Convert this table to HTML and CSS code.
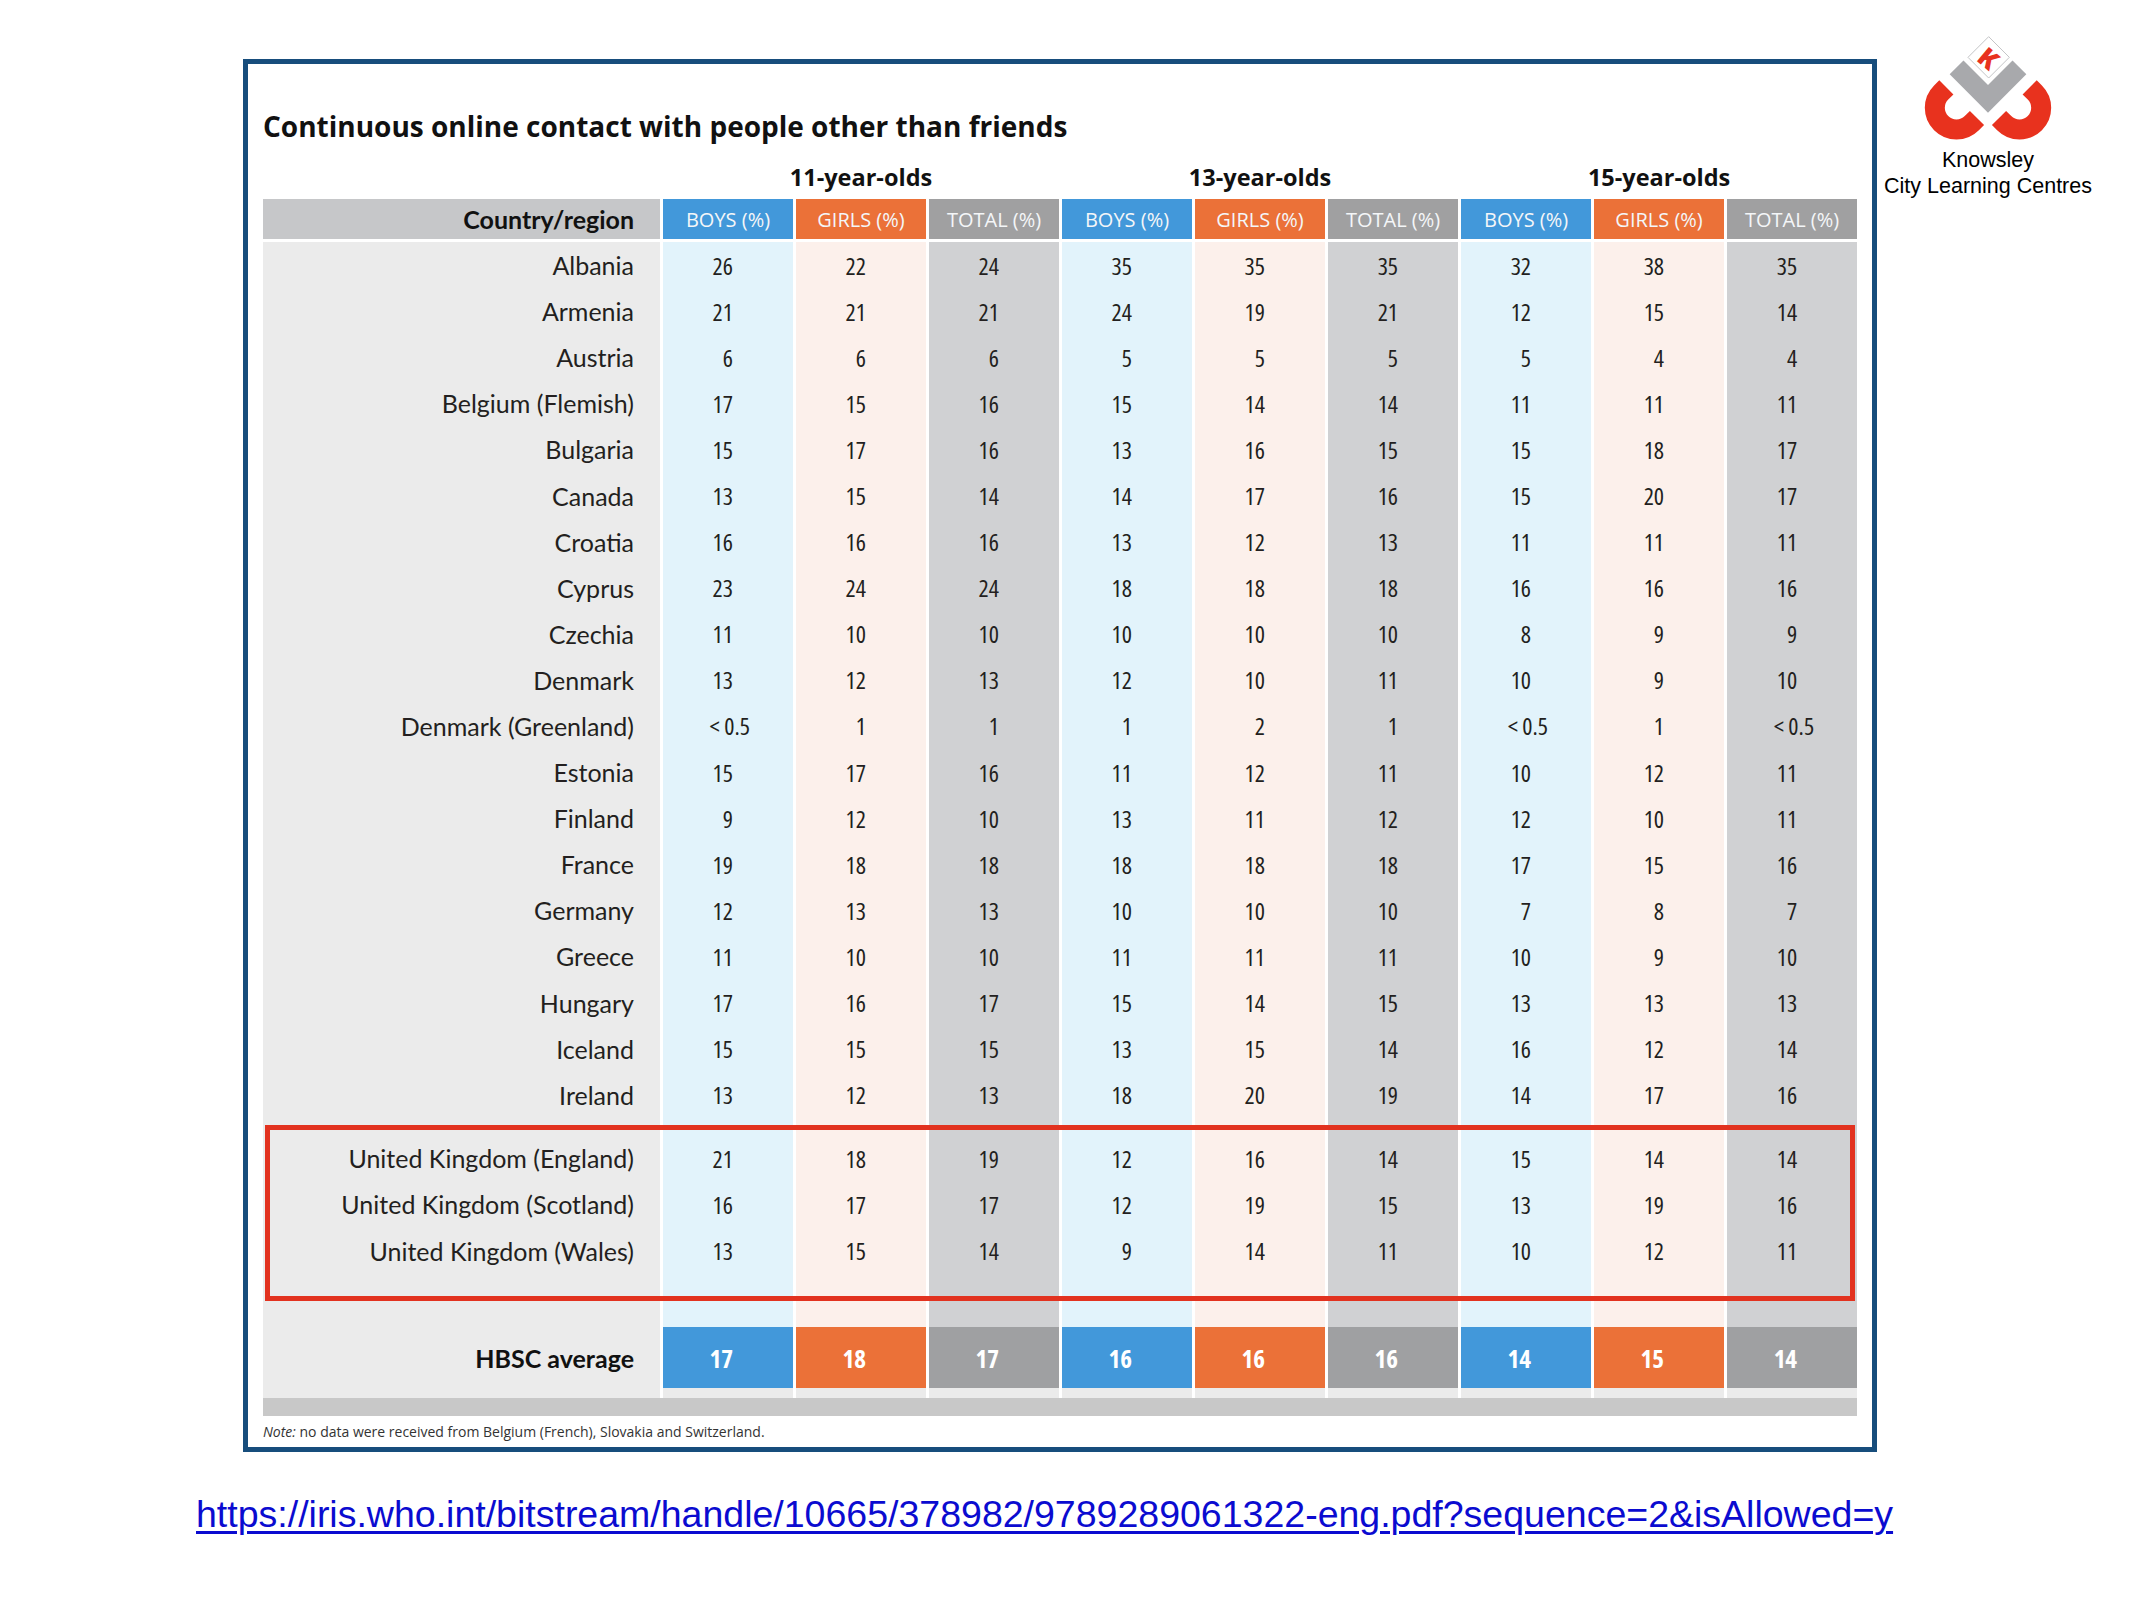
FILE: index.html
```html
<!DOCTYPE html>
<html lang="en">
<head>
<meta charset="utf-8">
<title>Continuous online contact with people other than friends</title>
<link rel="stylesheet" href="styles.css">
</head>
<body>
<div class="slide">
  <div class="top">
    <div class="frame">
      <h1 class="title">Continuous online contact with people other than friends</h1>
      <div class="table-wrap">
        <table class="data">
          <colgroup>
            <col class="c-name"><col class="c-val"><col class="c-val"><col class="c-val"><col class="c-val"><col class="c-val"><col class="c-val"><col class="c-val"><col class="c-val"><col class="c-val">
          </colgroup>
          <thead>
            <tr class="groups">
              <th></th>
              <th colspan="3">11-year-olds</th>
              <th colspan="3">13-year-olds</th>
              <th colspan="3">15-year-olds</th>
            </tr>
            <tr class="heads">
              <th class="hc">Country/region</th>
              <th class="hb">BOYS (%)</th><th class="hg">GIRLS (%)</th><th class="ht">TOTAL (%)</th>
              <th class="hb">BOYS (%)</th><th class="hg">GIRLS (%)</th><th class="ht">TOTAL (%)</th>
              <th class="hb">BOYS (%)</th><th class="hg">GIRLS (%)</th><th class="ht">TOTAL (%)</th>
            </tr>
          </thead>
          <tbody>
            <tr class="r"><td class="c">Albania</td><td class="b">26</td><td class="g">22</td><td class="t">24</td><td class="b">35</td><td class="g">35</td><td class="t">35</td><td class="b">32</td><td class="g">38</td><td class="t">35</td></tr>
            <tr class="r"><td class="c">Armenia</td><td class="b">21</td><td class="g">21</td><td class="t">21</td><td class="b">24</td><td class="g">19</td><td class="t">21</td><td class="b">12</td><td class="g">15</td><td class="t">14</td></tr>
            <tr class="r"><td class="c">Austria</td><td class="b">6</td><td class="g">6</td><td class="t">6</td><td class="b">5</td><td class="g">5</td><td class="t">5</td><td class="b">5</td><td class="g">4</td><td class="t">4</td></tr>
            <tr class="r"><td class="c">Belgium (Flemish)</td><td class="b">17</td><td class="g">15</td><td class="t">16</td><td class="b">15</td><td class="g">14</td><td class="t">14</td><td class="b">11</td><td class="g">11</td><td class="t">11</td></tr>
            <tr class="r"><td class="c">Bulgaria</td><td class="b">15</td><td class="g">17</td><td class="t">16</td><td class="b">13</td><td class="g">16</td><td class="t">15</td><td class="b">15</td><td class="g">18</td><td class="t">17</td></tr>
            <tr class="r"><td class="c">Canada</td><td class="b">13</td><td class="g">15</td><td class="t">14</td><td class="b">14</td><td class="g">17</td><td class="t">16</td><td class="b">15</td><td class="g">20</td><td class="t">17</td></tr>
            <tr class="r"><td class="c">Croatia</td><td class="b">16</td><td class="g">16</td><td class="t">16</td><td class="b">13</td><td class="g">12</td><td class="t">13</td><td class="b">11</td><td class="g">11</td><td class="t">11</td></tr>
            <tr class="r"><td class="c">Cyprus</td><td class="b">23</td><td class="g">24</td><td class="t">24</td><td class="b">18</td><td class="g">18</td><td class="t">18</td><td class="b">16</td><td class="g">16</td><td class="t">16</td></tr>
            <tr class="r"><td class="c">Czechia</td><td class="b">11</td><td class="g">10</td><td class="t">10</td><td class="b">10</td><td class="g">10</td><td class="t">10</td><td class="b">8</td><td class="g">9</td><td class="t">9</td></tr>
            <tr class="r"><td class="c">Denmark</td><td class="b">13</td><td class="g">12</td><td class="t">13</td><td class="b">12</td><td class="g">10</td><td class="t">11</td><td class="b">10</td><td class="g">9</td><td class="t">10</td></tr>
            <tr class="r"><td class="c">Denmark (Greenland)</td><td class="b">&lt; 0<span class="frac">.5</span></td><td class="g">1</td><td class="t">1</td><td class="b">1</td><td class="g">2</td><td class="t">1</td><td class="b">&lt; 0<span class="frac">.5</span></td><td class="g">1</td><td class="t">&lt; 0<span class="frac">.5</span></td></tr>
            <tr class="r"><td class="c">Estonia</td><td class="b">15</td><td class="g">17</td><td class="t">16</td><td class="b">11</td><td class="g">12</td><td class="t">11</td><td class="b">10</td><td class="g">12</td><td class="t">11</td></tr>
            <tr class="r"><td class="c">Finland</td><td class="b">9</td><td class="g">12</td><td class="t">10</td><td class="b">13</td><td class="g">11</td><td class="t">12</td><td class="b">12</td><td class="g">10</td><td class="t">11</td></tr>
            <tr class="r"><td class="c">France</td><td class="b">19</td><td class="g">18</td><td class="t">18</td><td class="b">18</td><td class="g">18</td><td class="t">18</td><td class="b">17</td><td class="g">15</td><td class="t">16</td></tr>
            <tr class="r"><td class="c">Germany</td><td class="b">12</td><td class="g">13</td><td class="t">13</td><td class="b">10</td><td class="g">10</td><td class="t">10</td><td class="b">7</td><td class="g">8</td><td class="t">7</td></tr>
            <tr class="r"><td class="c">Greece</td><td class="b">11</td><td class="g">10</td><td class="t">10</td><td class="b">11</td><td class="g">11</td><td class="t">11</td><td class="b">10</td><td class="g">9</td><td class="t">10</td></tr>
            <tr class="r"><td class="c">Hungary</td><td class="b">17</td><td class="g">16</td><td class="t">17</td><td class="b">15</td><td class="g">14</td><td class="t">15</td><td class="b">13</td><td class="g">13</td><td class="t">13</td></tr>
            <tr class="r"><td class="c">Iceland</td><td class="b">15</td><td class="g">15</td><td class="t">15</td><td class="b">13</td><td class="g">15</td><td class="t">14</td><td class="b">16</td><td class="g">12</td><td class="t">14</td></tr>
            <tr class="r"><td class="c">Ireland</td><td class="b">13</td><td class="g">12</td><td class="t">13</td><td class="b">18</td><td class="g">20</td><td class="t">19</td><td class="b">14</td><td class="g">17</td><td class="t">16</td></tr>
            <tr class="sp1"><td class="c"></td><td class="b"></td><td class="g"></td><td class="t"></td><td class="b"></td><td class="g"></td><td class="t"></td><td class="b"></td><td class="g"></td><td class="t"></td></tr>
            <tr class="r"><td class="c">United Kingdom (England)</td><td class="b">21</td><td class="g">18</td><td class="t">19</td><td class="b">12</td><td class="g">16</td><td class="t">14</td><td class="b">15</td><td class="g">14</td><td class="t">14</td></tr>
            <tr class="r"><td class="c">United Kingdom (Scotland)</td><td class="b">16</td><td class="g">17</td><td class="t">17</td><td class="b">12</td><td class="g">19</td><td class="t">15</td><td class="b">13</td><td class="g">19</td><td class="t">16</td></tr>
            <tr class="r"><td class="c">United Kingdom (Wales)</td><td class="b">13</td><td class="g">15</td><td class="t">14</td><td class="b">9</td><td class="g">14</td><td class="t">11</td><td class="b">10</td><td class="g">12</td><td class="t">11</td></tr>
            <tr class="sp2"><td class="c"></td><td class="b"></td><td class="g"></td><td class="t"></td><td class="b"></td><td class="g"></td><td class="t"></td><td class="b"></td><td class="g"></td><td class="t"></td></tr>
            <tr class="avg"><td class="c">HBSC average</td><td class="ab">17</td><td class="ag">18</td><td class="at">17</td><td class="ab">16</td><td class="ag">16</td><td class="at">16</td><td class="ab">14</td><td class="ag">15</td><td class="at">14</td></tr>
            <tr class="strip"><td></td><td></td><td></td><td></td><td></td><td></td><td></td><td></td><td></td><td></td></tr>
          </tbody>
        </table>
        <div class="highlight"></div>
      </div>
      <div class="bar"></div>
      <p class="note"><em>Note:</em> no data were received from Belgium (French), Slovakia and Switzerland.</p>
    </div>
    <div class="brand">
      <svg class="logo" width="140" height="110" viewBox="55 9 420 330" aria-hidden="true">
        <polygon points="150,133 191.5,91.5 265,165 338.5,91.5 380,133 265,248" fill="#a8a9ac"/>
        <polygon points="267,20 329,82 267,144 205,82" fill="#fff" stroke="#c4c5c7" stroke-width="3"/>
        <text x="0" y="0" transform="translate(267,84) rotate(40)" text-anchor="middle" dominant-baseline="central" class="k">K</text>
        <path d="M -65 0 L -65 22 A 65 65 0 0 0 65 22 L 65 0" transform="translate(186,218) rotate(45)" stroke="#e8321e" stroke-width="60" fill="none"/>
        <path d="M -65 0 L -65 22 A 65 65 0 0 0 65 22 L 65 0" transform="translate(344,218) rotate(-45)" stroke="#e8321e" stroke-width="60" fill="none"/>
      </svg>
      <div class="brand-name">Knowsley<br>City Learning Centres</div>
    </div>
  </div>
  <a class="source" href="https://iris.who.int/bitstream/handle/10665/378982/9789289061322-eng.pdf?sequence=2&amp;isAllowed=y">https://iris.who.int/bitstream/handle/10665/378982/9789289061322-eng.pdf?sequence=2&amp;isAllowed=y</a>
</div>
</body>
</html>
```
FILE: styles.css
```css
html, body {
  margin: 0;
  padding: 0;
  background: #fff;
}
body {
  width: 2133px;
  height: 1600px;
  overflow: hidden;
  font-family: "Lato", "Liberation Sans", sans-serif;
  color: #231f20;
}
.slide {
  display: flex;
  flex-direction: column;
}
.top {
  display: flex;
  align-items: flex-start;
  padding-left: 243px;
}
.frame {
  width: 1634px;
  box-sizing: border-box;
  margin-top: 59px;
  border: 5px solid #174d7c;
  padding: 44px 15px 5px 15px;
  height: 1393px;
}
.title {
  margin: 0;
  font-family: "Open Sans", sans-serif;
  font-weight: 700;
  font-stretch: 100%;
  font-size: 28px;
  line-height: 36px;
  color: #111;
}
.table-wrap {
  position: relative;
}
.data {
  border-collapse: separate;
  border-spacing: 3px 0;
  margin: 0 -3px;
  table-layout: fixed;
  width: 1600px;
}
.c-name { width: 397px; }
.c-val { width: 130px; }
.data th, .data td {
  padding: 0;
}
.groups th {
  height: 55px;
  vertical-align: bottom;
  padding-bottom: 7px;
  line-height: 30px;
  font-family: "Open Sans", sans-serif;
  font-weight: 700;
  font-stretch: 100%;
  font-size: 23.5px;
  color: #111;
  box-sizing: border-box;
}
.heads th {
  height: 43px;
  box-sizing: border-box;
  border-bottom: 3px solid #fff;
  font-family: "Open Sans", sans-serif;
  font-stretch: 100%;
  font-weight: 400;
  font-size: 20px;
  color: #f4f6f8;
  text-align: center;
  vertical-align: middle;
}
.heads th.hc {
  font-family: "Lato", sans-serif;
  font-stretch: 100%;
  font-weight: 700;
  font-size: 25px;
  color: #111;
  text-align: right;
  padding-right: 26px;
  background: #c6c7c9;
}
.hb { background: #4298da; }
.hg { background: #eb7138; }
.ht { background: #a0a0a1; }

.data td {
  vertical-align: middle;
  text-align: right;
  padding-right: 60px;
  font-family: "Open Sans", sans-serif;
  font-stretch: 75%;
  font-size: 24px;
  color: #231f20;
}
.frac {
  margin-right: -17px;
}
.data td.c {
  text-align: right;
  padding-right: 26px;
  font-family: "Lato", sans-serif;
  font-stretch: 100%;
  font-size: 25px;
  background: #ebebeb;
}
.data td.b { background: #e2f3fb; }
.data td.g { background: #fcf0eb; }
.data td.t { background: #d0d1d3; }
.r td { height: 46.1px; }
.sp1 td { height: 17.5px; }
.sp2 td { height: 53.6px; }
.avg td { height: 61px; }
.avg td.c {
  font-weight: 700;
  color: #111;
}
.avg td.ab, .avg td.ag, .avg td.at {
  color: #fff;
  font-weight: 700;
  font-stretch: 75%;
  font-size: 25px;
}
.ab { background: #4298da; }
.ag { background: #eb7138; }
.at { background: #9fa0a2; }
.strip td {
  height: 10px;
  background: #ebebeb;
}
.highlight {
  position: absolute;
  left: 2px;
  top: 981px;
  width: 1590px;
  height: 176px;
  box-sizing: border-box;
  border: 5px solid #e2321f;
  pointer-events: none;
}
.bar {
  height: 18px;
  background: #c8c8c8;
}
.note {
  margin: 6px 0 0 0;
  font-family: "Open Sans", sans-serif;
  font-stretch: 100%;
  font-size: 14px;
  line-height: 20px;
  color: #333;
}
.note em {
  font-style: italic;
}
.brand {
  margin-top: 33px;
  margin-left: 7px;
  width: 208px;
  display: flex;
  flex-direction: column;
  align-items: center;
}
.logo {
  display: block;
}
.k {
  font-family: "Open Sans", sans-serif;
  font-weight: 800;
  font-size: 78px;
  fill: #e8321e;
}
.brand-name {
  margin-top: 4px;
  font-family: "Liberation Sans", Arial, sans-serif;
  font-size: 21.5px;
  line-height: 26px;
  text-align: center;
  color: #000;
  white-space: nowrap;
}
.source {
  margin-top: 40px;
  margin-left: 196px;
  align-self: flex-start;
  font-family: "Liberation Sans", Arial, sans-serif;
  font-size: 37.5px;
  line-height: 44px;
  color: #0b0bd0;
  text-decoration: underline;
  text-decoration-thickness: 3px;
  text-underline-offset: 4px;
}
```
